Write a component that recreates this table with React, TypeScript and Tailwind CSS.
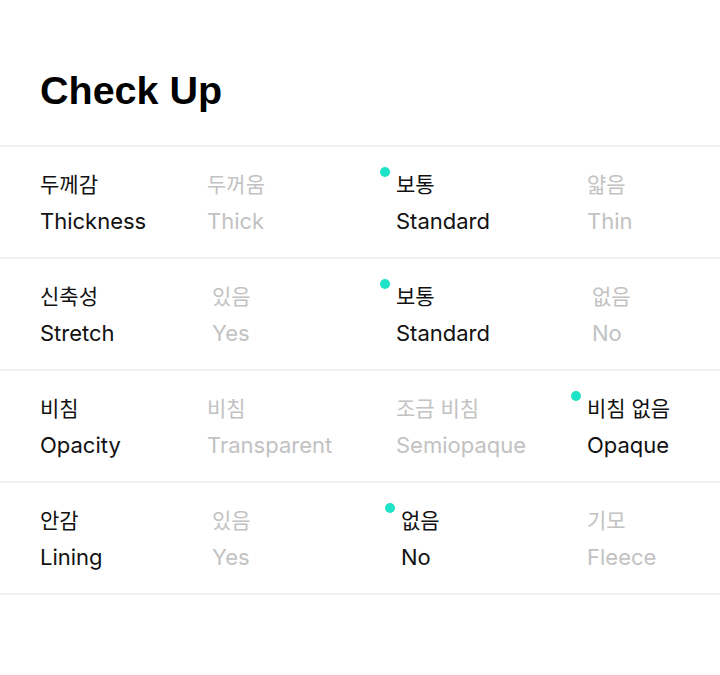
import React from "react";

type Option = { ko: string; en: string; shift?: boolean };
type Row = { ko: string; en: string; options: Option[]; selected: number };

const rows: Row[] = [
  {
    ko: "두께감",
    en: "Thickness",
    selected: 1,
    options: [
      { ko: "두꺼움", en: "Thick" },
      { ko: "보통", en: "Standard" },
      { ko: "얇음", en: "Thin" },
    ],
  },
  {
    ko: "신축성",
    en: "Stretch",
    selected: 1,
    options: [
      { ko: "있음", en: "Yes", shift: true },
      { ko: "보통", en: "Standard" },
      { ko: "없음", en: "No", shift: true },
    ],
  },
  {
    ko: "비침",
    en: "Opacity",
    selected: 2,
    options: [
      { ko: "비침", en: "Transparent" },
      { ko: "조금 비침", en: "Semiopaque" },
      { ko: "비침 없음", en: "Opaque" },
    ],
  },
  {
    ko: "안감",
    en: "Lining",
    selected: 1,
    options: [
      { ko: "있음", en: "Yes", shift: true },
      { ko: "없음", en: "No", shift: true },
      { ko: "기모", en: "Fleece" },
    ],
  },
];

function Label({ ko, en }: { ko: string; en: string }) {
  return (
    <>
      <p className="text-[21px] leading-[37px]">{ko}</p>
      <p className="text-[22px] leading-[37px]">{en}</p>
    </>
  );
}

function OptionCell({ option, active }: { option: Option; active: boolean }) {
  return (
    <div className={option.shift ? "pl-[5px]" : ""}>
      <div
        className={
          "relative w-fit " + (active ? "text-[#111111]" : "text-[#c2c2c2]")
        }
      >
        {active && (
          <span className="absolute left-[-16px] top-[1px] h-[10px] w-[10px] rounded-full bg-[#1ee3c7]" />
        )}
        <Label ko={option.ko} en={option.en} />
      </div>
    </div>
  );
}

export default function App() {
  return (
    <div
      className="min-h-[675px] w-[720px] bg-white"
      style={{ fontFamily: 'Inter, "Noto Sans CJK KR", sans-serif' }}
    >
      <div className="px-10 pb-[31px] pt-[66px]">
        <h1
          className="text-[39.5px] font-bold leading-[48px] text-black"
          style={{ fontFamily: '"Liberation Sans", Arial, sans-serif' }}
        >
          Check Up
        </h1>
      </div>

      <div className="border-b-2 border-[#efefef]">
        {rows.map((row) => (
          <div
            key={row.en}
            className="grid h-[112px] grid-cols-[167px_189px_191px_1fr] border-t-2 border-[#efefef] px-10 pt-[19px]"
          >
            <div className="text-[#111111]">
              <Label ko={row.ko} en={row.en} />
            </div>
            {row.options.map((o, i) => (
              <OptionCell key={o.en} option={o} active={i === row.selected} />
            ))}
          </div>
        ))}
      </div>
    </div>
  );
}
